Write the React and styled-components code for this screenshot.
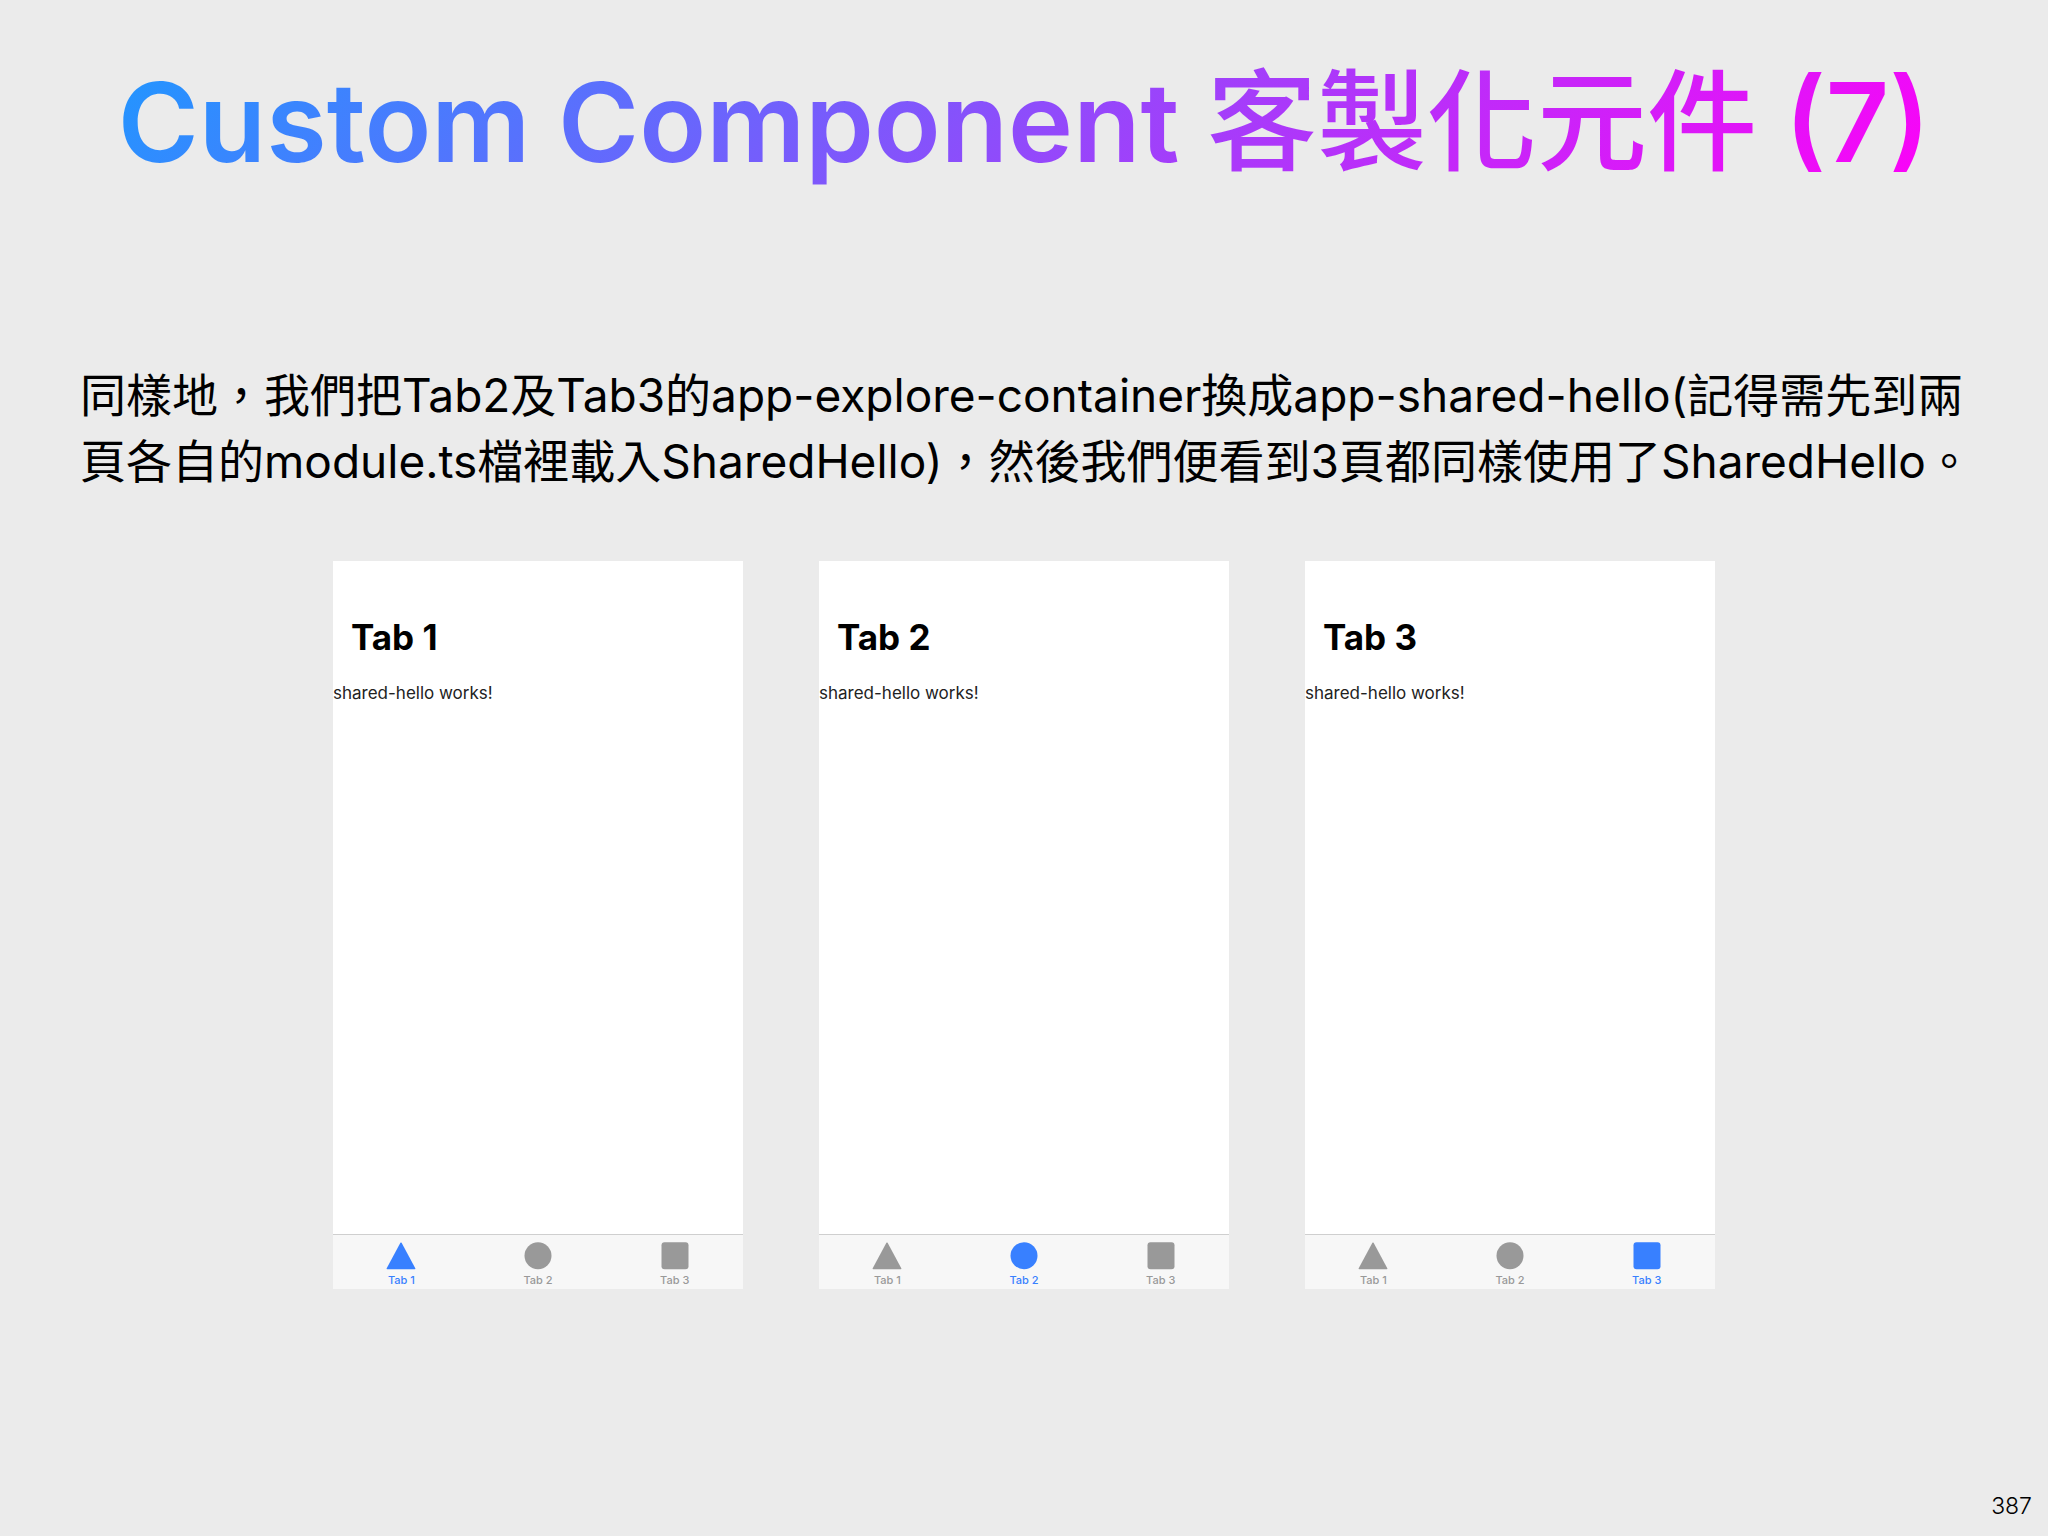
import React from 'react';
import styled, { createGlobalStyle } from 'styled-components';

const GlobalStyle = createGlobalStyle`
  * {
    box-sizing: border-box;
  }

  body {
    margin: 0;
    background-color: #ebebeb;
  }
`;

const Slide = styled.main`
  display: flex;
  flex-direction: column;
  align-items: center;
  min-height: 100vh;
  padding: 38px 64px 0;
  font-family: Inter, 'Noto Sans CJK TC', sans-serif;
  color: #000;
  background-color: #ebebeb;
`;

const Title = styled.h1`
  margin: 0;
  font-size: 110px;
  font-weight: 600;
  line-height: 168px;
  color: transparent;
  background-image: linear-gradient(135deg, #1e98ff 0%, #ff00f7 100%);
  background-clip: text;
  -webkit-background-clip: text;
`;

const TitleHan = styled.span`
  font-weight: 500;
`;

const Body = styled.p`
  width: 100%;
  margin: 156px 0 0;
  padding-left: 16px;
  font-size: 46px;
  line-height: 66px;
`;

const Phones = styled.div`
  display: flex;
  justify-content: center;
  gap: 76px;
  width: 100%;
  margin-top: 67px;
`;

const Phone = styled.section`
  display: flex;
  flex-direction: column;
  flex: 0 1 410px;
  aspect-ratio: 410 / 728;
  background-color: #fff;
`;

const PhoneTitle = styled.h2`
  margin: 52px 18px 0;
  font-size: 35px;
  font-weight: 700;
  line-height: 48px;
`;

const PhoneText = styled.p`
  margin: 20px 0 0;
  font-size: 17px;
  line-height: 24px;
  color: #222;
`;

const TabBar = styled.nav`
  display: flex;
  height: 55px;
  margin-top: auto;
  border-top: 1px solid #cfcfcf;
  background-color: #f7f7f7;
`;

const TabButton = styled.button`
  display: flex;
  flex: 1;
  flex-direction: column;
  align-items: center;
  gap: 2px;
  padding: 7px 0 0;
  border: 0;
  background: none;
  font-family: inherit;
  font-size: 11px;
  font-weight: 500;
  line-height: 16px;
  color: ${props => (props.$active ? '#3880ff' : '#999')};
`;

const TabIcon = styled.svg`
  display: block;
  width: 30px;
  height: 28px;
  fill: currentColor;
`;

const Footer = styled.footer`
  align-self: flex-end;
  margin: auto -48px 14px 0;
  font-size: 23px;
  font-weight: 300;
  line-height: 32px;
`;

const tabs = [
  { name: 'Tab 1', shape: <path d="M14.4.8Q15 0 15.6.8L29.3 26.2Q29.8 27.2 28.7 27.2H1.3Q.2 27.2.7 26.2Z" /> },
  { name: 'Tab 2', shape: <circle cx="15" cy="13.7" r="13.5" /> },
  { name: 'Tab 3', shape: <rect x="1.5" y=".2" width="27" height="27" rx="3" /> }
];

const SharedHello = () => <PhoneText>shared-hello works!</PhoneText>;

const TabPage = ({ current }) => (
  <Phone>
    <PhoneTitle>{current}</PhoneTitle>
    <SharedHello />
    <TabBar>
      {tabs.map(tab => (
        <TabButton key={tab.name} type="button" $active={tab.name === current}>
          <TabIcon viewBox="0 0 30 28" aria-hidden="true">{tab.shape}</TabIcon>
          {tab.name}
        </TabButton>
      ))}
    </TabBar>
  </Phone>
);

const App = () => (
  <Slide lang="zh-TW">
    <GlobalStyle />
    <Title>Custom Component <TitleHan>客製化元件</TitleHan> (7)</Title>
    <Body>
      同樣地，我們把Tab2及Tab3的app-explore-container換成app-shared-hello(記得需先到兩頁各自的module.ts檔裡載入SharedHello)，然後我們便看到3頁都同樣使用了SharedHello。
    </Body>
    <Phones>
      {tabs.map(tab => (
        <TabPage key={tab.name} current={tab.name} />
      ))}
    </Phones>
    <Footer>387</Footer>
  </Slide>
);

export default App;
